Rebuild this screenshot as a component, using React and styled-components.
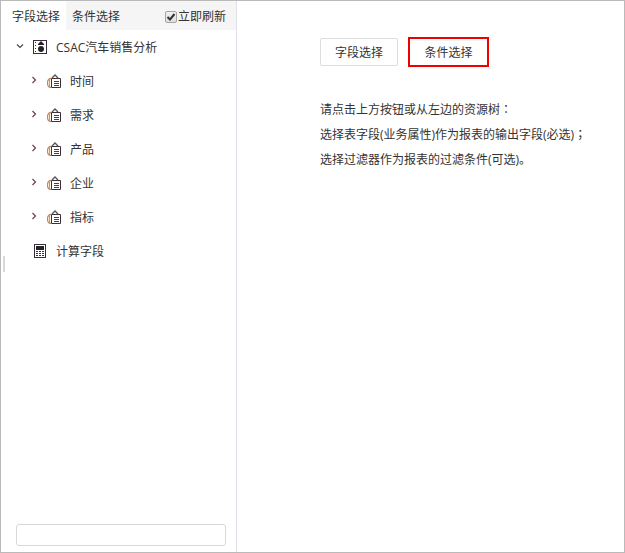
import React, { useState } from "react";
import styled, { createGlobalStyle } from "styled-components";

const GlobalStyle = createGlobalStyle`
  * {
    box-sizing: border-box;
  }
  body {
    margin: 0;
    background: #fff;
  }
  body, button, input {
    font-family: "Open Sans", "Noto Sans CJK SC", sans-serif;
    font-size: 12px;
    color: #333;
  }
`;

const Page = styled.div`
  display: flex;
  min-height: 100vh;
  border: 1px solid #bababa;
`;

const Splitter = styled.div`
  display: flex;
  align-items: center;
  width: 5px;
  padding-left: 2px;
`;

const Grip = styled.div`
  width: 2px;
  height: 16px;
  margin-bottom: 26px;
  background: #d8d8d8;
`;

const Sidebar = styled.aside`
  display: flex;
  flex-direction: column;
  flex: 0 0 231px;
  border-right: 1px solid #e0e0e8;
`;

const TabBar = styled.div`
  display: flex;
  align-items: center;
  height: 29px;
  background: #f5f5f5;
`;

const Tab = styled.button`
  height: 100%;
  padding: 2px 6px 0;
  border: none;
  line-height: 18px;
  background: ${(props) => (props.$active ? "#fff" : "transparent")};
  cursor: pointer;
`;

const Refresh = styled.label`
  display: flex;
  align-items: center;
  gap: 1px;
  margin-left: auto;
  padding: 2px 10px 0 0;
  line-height: 18px;
`;

const CheckWrap = styled.span`
  display: grid;
  width: 12px;
  height: 12px;

  > * {
    grid-area: 1 / 1;
  }
  svg {
    pointer-events: none;
  }
  input:not(:checked) + svg {
    visibility: hidden;
  }
`;

const Checkbox = styled.input`
  appearance: none;
  width: 12px;
  height: 12px;
  margin: 0;
  border: 1px solid #a5a5a5;
  border-radius: 2px;
  background: linear-gradient(#f2f2f2, #dedede);
`;

const Tree = styled.ul`
  flex: 1;
  margin: 0;
  padding: 0;
  list-style: none;
`;

const Node = styled.li`
  display: flex;
  align-items: center;
  height: 34px;
  padding-left: ${(props) => (props.$level ? 24 : 10)}px;
`;

const Toggle = styled.button`
  display: flex;
  align-items: center;
  justify-content: center;
  width: 8px;
  height: 12px;
  margin: 0 9px 2px 0;
  padding: 0;
  border: none;
  background: none;
  cursor: pointer;
`;

const Spacer = styled.span`
  width: 17px;
`;

const NodeIcon = styled.span`
  display: flex;
  width: 14px;
  height: 14px;
  margin-right: 9px;
`;

const Label = styled.span`
  padding-top: 2px;
  line-height: 18px;
`;

const SearchBox = styled.input`
  height: 22px;
  margin: 0 10px 6px;
  padding: 0 6px;
  border: 1px solid #d8d8d8;
  border-radius: 3px;
  outline: none;
`;

const Main = styled.main`
  flex: 1;
  padding: 36px 20px 20px 83px;
`;

const Actions = styled.div`
  display: flex;
  align-items: center;
  gap: 10px;
`;

const ActionButton = styled.button`
  width: ${(props) => (props.$marked ? 81 : 78)}px;
  height: ${(props) => (props.$marked ? 30 : 28)}px;
  padding: 2px 0 0;
  border: ${(props) => (props.$marked ? "2px solid #f00000" : "1px solid #ddd")};
  border-radius: ${(props) => (props.$marked ? 0 : 2)}px;
  line-height: 18px;
  background: #fff;
  cursor: pointer;
`;

const Help = styled.div`
  margin-top: 30px;
`;

const HelpLine = styled.p`
  margin: 0;
  line-height: 25px;
`;

// the TC face centres the colon and semicolon in their cell
const Mark = styled.span`
  font-family: "Noto Sans CJK TC", sans-serif;
  line-height: 1;
`;

function Chevron({ open }) {
  return (
    <svg width="8" height="8" viewBox="0 0 8 8" fill="none" stroke={open ? "#444" : "#6b3540"} strokeWidth="1.1">
      <path d={open ? "M1 2.5 4 5.5 7 2.5" : "M2.5 1 5.5 4 2.5 7"} />
    </svg>
  );
}

function ThemeIcon() {
  return (
    <svg width="14" height="14" viewBox="0 0 14 14">
      <rect x=".5" y=".5" width="13" height="13" fill="#fff" stroke="#3b2a40" />
      <path d="M2 2h1v1H2zM2 5h1v1H2zM2 8h1v1H2zM2 11h1v1H2z" fill="#333" />
      <path d="M8 1 11 4v1H5V4z" fill="#222" />
      <circle cx="8" cy="9" r="3" fill="#222" />
    </svg>
  );
}

function DimensionIcon() {
  return (
    <svg width="14" height="14" viewBox="0 0 14 14" fill="none">
      <path d="M4.5 4.5h9v9h-9z" stroke="#3f3038" />
      <path d="M7 7.5h5M7 9.5h5M7 11.5h5" stroke="#444" />
      <path d="M5 4 8 1l3 3" stroke="#555" strokeWidth="1.4" />
      <path d="M4 4.5C2 4.5.5 6 .5 9S2 13.5 4 13.5" stroke="#c08a50" strokeWidth="1.3" />
      <path d="M2.5 6v7" stroke="#85a8c4" />
    </svg>
  );
}

function CalculatorIcon() {
  return (
    <svg width="14" height="14" viewBox="0 0 14 14">
      <rect x="1.5" y=".5" width="11" height="13" fill="#fff" stroke="#3b2a40" />
      <path d="M3 2h8v4H3z" fill="#222" />
      <path
        d="M3 7h2v1H3zM6 7h2v1H6zM9 7h2v1H9zM3 9h2v1H3zM6 9h2v1H6zM9 9h2v1H9zM3 11h2v1H3zM6 11h2v1H6zM9 11h2v1H9z"
        fill="#333"
      />
    </svg>
  );
}

const groups = ["时间", "需求", "产品", "企业", "指标"];

function App() {
  const [tab, setTab] = useState("fields");
  const [open, setOpen] = useState(true);

  return (
    <Page>
      <GlobalStyle />
      <Splitter>
        <Grip />
      </Splitter>
      <Sidebar>
        <TabBar>
          <Tab $active={tab === "fields"} onClick={() => setTab("fields")}>
            字段选择
          </Tab>
          <Tab $active={tab === "filters"} onClick={() => setTab("filters")}>
            条件选择
          </Tab>
          <Refresh>
            <CheckWrap>
              <Checkbox type="checkbox" defaultChecked />
              <svg width="12" height="12" viewBox="0 0 12 12" fill="none" stroke="#333" strokeWidth="2">
                <path d="M2.5 6 5 8.5 9.5 3" />
              </svg>
            </CheckWrap>
            立即刷新
          </Refresh>
        </TabBar>
        <Tree>
          <Node>
            <Toggle aria-label="CSAC汽车销售分析" aria-expanded={open} onClick={() => setOpen(!open)}>
              <Chevron open={open} />
            </Toggle>
            <NodeIcon>
              <ThemeIcon />
            </NodeIcon>
            <Label>CSAC汽车销售分析</Label>
          </Node>
          {open &&
            groups.map((name) => (
              <Node key={name} $level={1}>
                <Toggle aria-label={name}>
                  <Chevron />
                </Toggle>
                <NodeIcon>
                  <DimensionIcon />
                </NodeIcon>
                <Label>{name}</Label>
              </Node>
            ))}
          <Node>
            <Spacer />
            <NodeIcon>
              <CalculatorIcon />
            </NodeIcon>
            <Label>计算字段</Label>
          </Node>
        </Tree>
        <SearchBox type="text" aria-label="搜索" />
      </Sidebar>
      <Main>
        <Actions>
          <ActionButton>字段选择</ActionButton>
          <ActionButton $marked>条件选择</ActionButton>
        </Actions>
        <Help>
          <HelpLine>
            请点击上方按钮或从左边的资源树<Mark>：</Mark>
          </HelpLine>
          <HelpLine>
            选择表字段(业务属性)作为报表的输出字段(必选)<Mark>；</Mark>
          </HelpLine>
          <HelpLine>选择过滤器作为报表的过滤条件(可选)。</HelpLine>
        </Help>
      </Main>
    </Page>
  );
}

export default App;
